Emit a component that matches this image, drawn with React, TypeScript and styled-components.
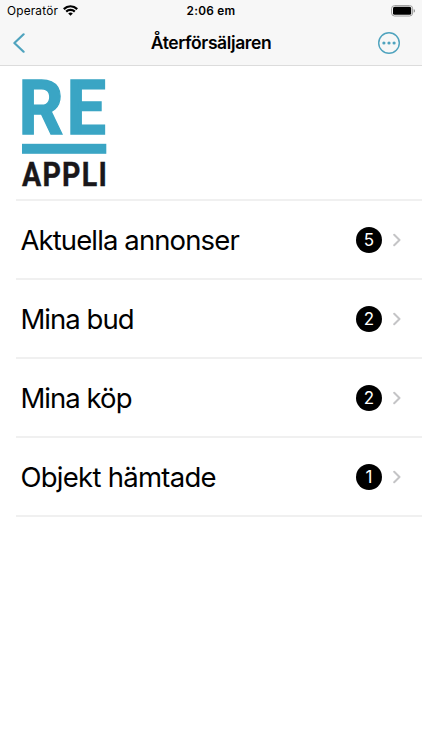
import React from "react";
import styled, { createGlobalStyle } from "styled-components";

const GlobalStyle = createGlobalStyle`
  * { box-sizing: border-box; }
  body { margin: 0; background: #fff; color: #000; font-family: Inter, "Liberation Sans", sans-serif; }
`;

const Screen = styled.main`
  display: flex;
  flex-direction: column;
  width: 100%;
  height: 750px;
  background: #fff;
  overflow: hidden;
`;

const Header = styled.header`
  height: 66px;
  background: #f7f7f7;
  border-bottom: 1px solid #dcdcdc;
`;

const StatusBar = styled.div`
  display: grid;
  grid-template-columns: 1fr auto 1fr;
  align-items: center;
  height: 21px;
  padding: 0 7px;
`;

const Carrier = styled.div`
  display: flex;
  align-items: center;
  gap: 5px;
  font-size: 11.8px;
  letter-spacing: 0.2px;
  line-height: 20px;
  svg { display: block; }
`;

const Clock = styled.time`
  font-size: 11.8px;
  font-weight: 600;
  letter-spacing: 0.25px;
  line-height: 20px;
`;

const Battery = styled.svg`
  display: block;
  justify-self: end;
`;

const NavBar = styled.nav`
  display: grid;
  grid-template-columns: 1fr auto 1fr;
  align-items: center;
  height: 44px;
  padding: 0 21px 0 12px;
`;

const Title = styled.h1`
  margin: 0 0 0 9px;
  font-size: 17.5px;
  font-weight: 600;
  letter-spacing: -0.4px;
  line-height: 24px;
`;

const IconButton = styled.button<{ $end?: boolean }>`
  display: block;
  justify-self: ${(p) => (p.$end ? "end" : "start")};
  padding: 0;
  border: 0;
  background: none;
  color: #4fa3be;
  svg { display: block; }
`;

const LogoCell = styled.div`
  height: 135px;
  margin-left: 16px;
  padding: 13px 0 0 6px;
  border-bottom: 2px solid #f0f0f0;
  svg { display: block; overflow: visible; }
`;

const List = styled.ul`
  margin: 0;
  padding: 0 0 0 16px;
  list-style: none;
`;

const Row = styled.li`
  display: flex;
  align-items: center;
  height: 79px;
  padding: 0 21px 0 4.4px;
  border-bottom: 2px solid #f0f0f0;
`;

const Label = styled.span<{ $tracking: number }>`
  flex: 1;
  font-size: 27.5px;
  letter-spacing: ${(p) => p.$tracking}px;
  line-height: 36px;
`;

const Badge = styled.span`
  display: grid;
  place-items: center;
  width: 26px;
  height: 26px;
  margin-right: 11px;
  padding-top: 1px;
  border-radius: 50%;
  background: #000;
  color: #fff;
  font-size: 17px;
  line-height: 25px;
`;

const rows = [
  { label: "Aktuella annonser", count: 5, tracking: -0.88 },
  { label: "Mina bud", count: 2, tracking: -0.95 },
  { label: "Mina köp", count: 2, tracking: -0.95 },
  { label: "Objekt hämtade", count: 1, tracking: -0.73 },
];

const WifiIcon = () => (
  <svg width="15" height="11" viewBox="0 0 15 11" fill="none" stroke="#000" strokeWidth="2.2">
    <path d="M0.8 4.1C4.6.3 10.4.3 14.2 4.1" />
    <path d="M3.2 6.6C5.6 4.2 9.4 4.2 11.8 6.6" />
    <path d="M7.5 10.8 5.2 8.5C6.5 7.3 8.5 7.3 9.8 8.5Z" fill="#000" stroke="none" />
  </svg>
);

const Logo = () => (
  <svg width="86" height="110" viewBox="0 0 86 110" fontFamily="Roboto, sans-serif" fontWeight="700">
    <text transform="translate(-3.4 55.2) scale(.92 1)" fontSize="76.5" letterSpacing="3" fill="#3aa5c4" stroke="#3aa5c4" strokeWidth="1.4">RE</text>
    <rect y="64.8" width="84.3" height="10" fill="#3aa5c4" />
    <text transform="translate(0 107) scale(.86 1)" fontSize="33.3" letterSpacing="1.4" fill="#19171a" stroke="#19171a" strokeWidth=".4">APPLI</text>
  </svg>
);

export default function App() {
  return (
    <Screen>
      <GlobalStyle />
      <Header>
        <StatusBar>
          <Carrier>
            Operatör
            <WifiIcon />
          </Carrier>
          <Clock>2:06 em</Clock>
          <Battery width="25" height="12" viewBox="0 0 25 12">
            <rect x="1.6" y=".6" width="21" height="10.4" rx="3" fill="#fff" stroke="#999" />
            <rect x="3" y="1.8" width="18.2" height="8" rx="1.6" fill="#000" />
            <path d="M23.8 4v3.8c.7-.4 1-1.1 1-1.900S24.5 4.4 23.8 4Z" fill="#777" />
          </Battery>
        </StatusBar>
        <NavBar>
          <IconButton aria-label="Tillbaka">
            <svg width="14" height="20" viewBox="0 0 14 20" fill="none" stroke="currentColor" strokeWidth="2.2" strokeLinecap="round" strokeLinejoin="round">
              <path d="M11.6 1.3 2.4 10l9.200 8.700" />
            </svg>
          </IconButton>
          <Title>Återförsäljaren</Title>
          <IconButton $end aria-label="Mer">
            <svg width="24" height="24" viewBox="0 0 24 24" fill="currentColor">
              <circle cx="12" cy="12" r="10.3" fill="none" stroke="currentColor" strokeWidth="1.4" />
              <circle cx="6.9" cy="12" r="1.6" />
              <circle cx="12" cy="12" r="1.6" />
              <circle cx="17.1" cy="12" r="1.6" />
            </svg>
          </IconButton>
        </NavBar>
      </Header>
      <LogoCell>
        <Logo />
      </LogoCell>
      <List>
        {rows.map((row) => (
          <Row key={row.label}>
            <Label $tracking={row.tracking}>{row.label}</Label>
            <Badge>{row.count}</Badge>
            <svg width="8" height="14" viewBox="0 0 8 14" fill="none" stroke="#c4c4c6" strokeWidth="2" strokeLinecap="round" strokeLinejoin="round">
              <path d="M1.2 1.7 6.5 7l-5.3 5.3" />
            </svg>
          </Row>
        ))}
      </List>
    </Screen>
  );
}
